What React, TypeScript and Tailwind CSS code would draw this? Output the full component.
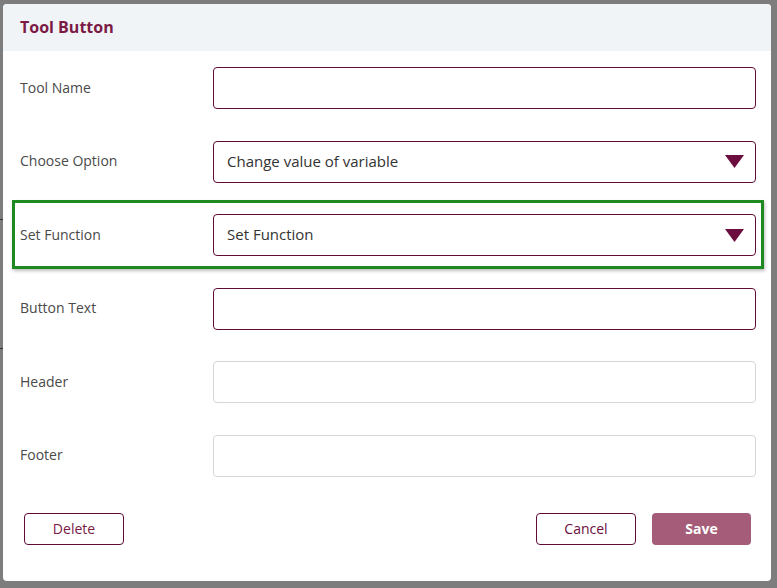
const Caret = () => (
  <svg width="19" height="13" viewBox="0 0 19 13" className="shrink-0">
    <polygon points="0,0 19,0 9.5,13" fill="#6b0d3e" />
  </svg>
);

const Field = ({ label, value, select, muted, highlight }: any) => (
  <div className="relative flex items-center h-[42px]">
    {highlight && (
      <div className="absolute -top-[14px] -bottom-[13px] -left-[8px] -right-[8px] border-[3px] border-[#1f8a1f] shadow-[1px_2px_3px_rgba(0,0,0,0.25)] pointer-events-none" />
    )}
    <div className="w-[193px] text-[14px] text-[#4a4a4a] -mt-[2px]">{label}</div>
    <div
      className={`flex-1 h-[42px] rounded-[4px] border flex items-center pl-[13px] pr-[11px] ${
        muted ? "border-[#d3d7db]" : "border-[#5e0b35]"
      }`}
    >
      <span className="flex-1 text-[15px] text-[#333] -mt-[1px]">{value}</span>
      {select && <Caret />}
    </div>
  </div>
);

export default function App() {
  return (
    <div
      className="relative w-[777px] h-[588px] bg-[#7d7d7d] pt-[4px] pl-[3px]"
      style={{ fontFamily: "'Open Sans', Lato, sans-serif" }}
    >
      <div className="absolute left-0 top-[219px] w-[3px] h-px bg-[#333]" />
      <div className="absolute left-0 top-[348px] w-[3px] h-px bg-[#333]" />
      <div className="w-[768px] h-[577px] bg-white rounded-[4px] overflow-hidden flex flex-col">
        <div className="h-[47px] bg-[#f1f4f7] flex items-center px-[17px]">
          <h1 className="text-[16px] font-bold text-[#7a1a45] -mt-[1px]">Tool Button</h1>
        </div>
        <div className="flex flex-col gap-[31.6px] pt-[16px] pl-[17px] pr-[15px]">
          <Field label="Tool Name" />
          <Field label="Choose Option" value="Change value of variable" select />
          <Field label="Set Function" value="Set Function" select highlight />
          <Field label="Button Text" />
          <Field label="Header" muted />
          <Field label="Footer" muted />
        </div>
        <div className="flex items-center mt-[36px] pl-[21px] pr-[20px]">
          <button className="w-[100px] h-[32px] rounded-[4px] border border-[#5e0b35] text-[14px] text-[#7a1a45]">
            Delete
          </button>
          <div className="flex-1" />
          <button className="w-[100px] h-[32px] rounded-[4px] border border-[#5e0b35] text-[14px] text-[#6b0d3e]">
            Cancel
          </button>
          <button className="ml-[16px] w-[99px] h-[32px] rounded-[4px] bg-[#a45c79] text-[14px] font-bold text-white">
            Save
          </button>
        </div>
      </div>
    </div>
  );
}
